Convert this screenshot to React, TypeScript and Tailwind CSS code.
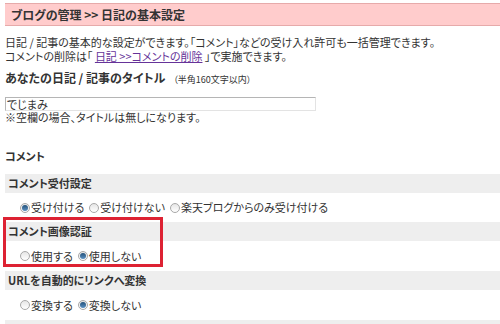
import React from "react";

const Radio = ({ checked }: { checked?: boolean }) => (
  <span className="inline-flex w-[10px] h-[10px] rounded-full border border-[#a8a8a8] bg-gradient-to-b from-[#e6e6e6] to-[#ffffff] items-center justify-center mr-[1px] shrink-0">
    {checked && (
      <span className="w-[6px] h-[6px] rounded-full bg-gradient-to-b from-[#23517a] to-[#5d93c4]" />
    )}
  </span>
);

const Option = ({ label, checked }: { label: string; checked?: boolean }) => (
  <label className="inline-flex items-center mr-[5px]">
    <Radio checked={checked} />
    <span>{label}</span>
  </label>
);

const SubHead = ({ children }: { children: React.ReactNode }) => (
  <div className="h-[19px] bg-[#eeeeee] flex items-center pl-[3px] font-bold">
    {children}
  </div>
);

const Options = ({
  items,
  h = "h-[30px]",
}: {
  items: { label: string; checked?: boolean }[];
  h?: string;
}) => (
  <div className={h + " flex items-center pl-[15px]"}>
    {items.map((it) => (
      <Option key={it.label} label={it.label} checked={it.checked} />
    ))}
  </div>
);

export default function App() {
  return (
    <div className="w-[500px] h-[324px] overflow-hidden bg-white text-[#333333] text-[11px] leading-[13px] font-['Noto_Sans_CJK_JP',sans-serif] [font-feature-settings:'palt']">
      <div className="pl-[5px] pt-[3px]">
        {/* ヘッダー */}
        <div className="h-[23px] bg-[#ffcccc] border-y border-[#e6aaaa] flex items-center pl-[6px] font-bold text-[12px] text-[#333333]">
          ブログの管理 &gt;&gt; 日記の基本設定
        </div>

        <div className="mt-[9px] leading-[14px]">
          <p>日記 / 記事の基本的な設定ができます。「コメント」などの受け入れ許可も一括管理できます。</p>
          <p>
            コメントの削除は「{" "}
            <a href="#" className="text-[#663399] underline">
              日記 &gt;&gt;コメントの削除
            </a>{" "}
            」で実施できます。
          </p>
        </div>

        <div className="mt-[8px] flex items-baseline">
          <span className="font-bold text-[12px]">あなたの日記 / 記事のタイトル</span>
          <span className="text-[9px] ml-[8px]">（半角160文字以内）</span>
        </div>

        <div className="mt-[11px] w-[311px] h-[14px] border border-[#b5b5b5] border-r-[#e3e3e3] border-b-[#e3e3e3] flex items-center px-[1px] leading-none">
          でじまみ
        </div>
        <p>※空欄の場合、タイトルは無しになります。</p>

        <div className="mt-[26px] font-bold">コメント</div>

        <div className="mt-[11px]">
          <SubHead>コメント受付設定</SubHead>
          <Options
            h="h-[29px]"
            items={[
              { label: "受け付ける", checked: true },
              { label: "受け付けない" },
              { label: "楽天ブログからのみ受け付ける" },
            ]}
          />
          <div className="relative">
            <SubHead>コメント画像認証</SubHead>
            <Options items={[{ label: "使用する" }, { label: "使用しない", checked: true }]} />
            <div className="absolute left-[-2px] top-[-5px] w-[160px] h-[50px] border-[3px] border-[#dd2233] pointer-events-none" />
          </div>
          <SubHead>URLを自動的にリンクへ変換</SubHead>
          <Options items={[{ label: "変換する" }, { label: "変換しない", checked: true }]} />
          <SubHead>&nbsp;</SubHead>
        </div>
      </div>
    </div>
  );
}
